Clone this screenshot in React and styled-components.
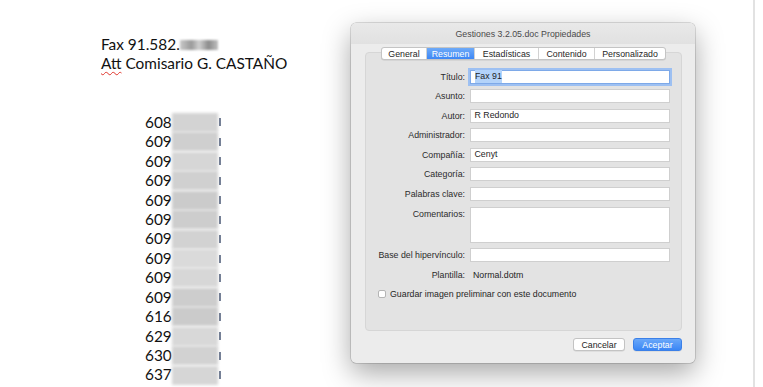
import React from "react";
import styled, { createGlobalStyle } from "styled-components";

const GlobalStyle = createGlobalStyle`
  html, body { margin: 0; padding: 0; background: #ffffff; }
  body { font-family: "Liberation Sans", Arial, sans-serif; }
  * { box-sizing: border-box; }
`;

const Page = styled.div`
  position: relative;
  width: 763px;
  height: 387px;
  overflow: hidden;
  background: #ffffff;
`;

const DocSheet = styled.div`
  width: 755px;
  height: 387px;
  border-right: 2px solid #e2e2e2;
  padding: 35px 0 0 101px;
  font-family: Lato, "Liberation Sans", sans-serif;
  font-size: 15.4px;
  color: #111;
`;

const DocLine = styled.div`
  height: 19.45px;
  line-height: 19.45px;
  white-space: nowrap;
  display: flex;
  align-items: center;
  padding-left: ${(p) => (p.$indent ? "44px" : "0")};
`;

const Misspelled = styled.span`
  text-decoration: underline wavy #e0352b;
  text-decoration-thickness: 1px;
  text-underline-offset: 2px;
`;

const Redacted = styled.span`
  display: inline-block;
  width: ${(p) => p.$w}px;
  height: ${(p) => p.$h}px;
  background: ${(p) => p.$bg};
  filter: blur(${(p) => p.$blur}px);
  margin-left: ${(p) => p.$ml || 0}px;
`;

const Sliver = styled.span`
  display: inline-block;
  width: 2px;
  height: 8px;
  background: #3a4a6a;
  opacity: 0.7;
  margin-left: 1px;
`;

const Dialog = styled.div`
  position: absolute;
  left: 351px;
  top: 23px;
  width: 344px;
  height: 340px;
  background: #ececec;
  border-radius: 5px;
  box-shadow: 0 0 0 0.5px rgba(0, 0, 0, 0.25), 0 10px 28px rgba(0, 0, 0, 0.35);
  display: flex;
  flex-direction: column;
  font-family: "Liberation Sans", Arial, sans-serif;
  font-size: 8.8px;
  color: #262626;
`;

const TitleBar = styled.div`
  height: 21px;
  display: flex;
  align-items: center;
  justify-content: center;
  color: #4a4a4a;
  background: linear-gradient(#e9e9e9, #e1e1e1);
  border-radius: 5px 5px 0 0;
`;

const Body = styled.div`
  flex: 1;
  display: flex;
  flex-direction: column;
  padding: 3px 13px 0 14px;
`;

const Tabs = styled.div`
  align-self: center;
  display: flex;
  height: 13px;
  margin-bottom: -8px;
  position: relative;
  z-index: 1;
  background: #ffffff;
  border: 0.5px solid #c4c4c4;
  border-radius: 3px;
  box-shadow: 0 0.5px 0.5px rgba(0, 0, 0, 0.12);
  overflow: hidden;
`;

const Tab = styled.div`
  width: ${(p) => p.$w}px;
  display: flex;
  align-items: center;
  justify-content: center;
  color: ${(p) => (p.$active ? "#ffffff" : "#262626")};
  background: ${(p) =>
    p.$active ? "linear-gradient(#6eaaf8, #3d87f5)" : "transparent"};
  border-left: ${(p) => (p.$first ? "none" : "0.5px solid #d2d2d2")};
`;

const Panel = styled.div`
  height: 279px;
  background: #e3e3e3;
  border: 0.5px solid #d6d6d6;
  border-radius: 4px;
  padding-top: 16.5px;
`;

const Form = styled.div`
  display: grid;
  grid-template-columns: 99px 200px;
  column-gap: 5px;
  row-gap: 5.6px;
`;

const Label = styled.div`
  text-align: right;
  line-height: 14px;
  height: ${(p) => p.$h || 14}px;
  color: #2b2b2b;
`;

const Field = styled.div`
  height: ${(p) => p.$h || 14}px;
  background: #ffffff;
  border: 0.5px solid ${(p) => (p.$focus ? "#7ea9e8" : "#cfcfcf")};
  box-shadow: ${(p) => (p.$focus ? "0 0 0 2px #9dc0f2" : "none")};
  padding: 0 3.5px;
  line-height: 13px;
  display: flex;
  align-items: ${(p) => (p.$multi ? "flex-start" : "center")};
  color: #1e1e1e;
`;

const Selected = styled.span`
  background: #b3d3fa;
  padding: 0 0.5px;
`;

const Plain = styled.div`
  line-height: 14px;
  height: 14px;
  padding-left: 3px;
  color: #1e1e1e;
`;

const CheckRow = styled.label`
  grid-column: 1 / span 2;
  display: flex;
  align-items: center;
  gap: 4px;
  padding-left: 12px;
  height: 14px;
  color: #262626;
`;

const Box = styled.span`
  width: 8px;
  height: 8px;
  background: #ffffff;
  border: 0.5px solid #b5b5b5;
  border-radius: 2px;
`;

const Footer = styled.div`
  display: flex;
  justify-content: flex-end;
  gap: 8px;
  margin-top: 7px;
`;

const Button = styled.div`
  width: ${(p) => p.$w}px;
  height: 13px;
  display: flex;
  align-items: center;
  justify-content: center;
  border-radius: 3px;
  color: ${(p) => (p.$primary ? "#ffffff" : "#262626")};
  background: ${(p) =>
    p.$primary ? "linear-gradient(#6aa8f9, #3a86f5)" : "#ffffff"};
  border: 0.5px solid ${(p) => (p.$primary ? "#3b80e8" : "#c3c3c3")};
  box-shadow: 0 0.5px 0.5px rgba(0, 0, 0, 0.12);
`;

const numbers = ["608", "609", "609", "609", "609", "609", "609", "609", "609", "609", "616", "629", "630", "637"];
const shades = ["#d3d3d3", "#cfcfcf", "#d6d6d6", "#d0d0d0", "#cbcbcb", "#cdcdcd", "#d2d2d2", "#dadada", "#d7d7d7", "#cdcdcd", "#cbcbcb", "#d8d8d8", "#d2d2d2", "#d6d6d6"];

const tabs = [
  { name: "General", w: 44 },
  { name: "Resumen", w: 48 },
  { name: "Estadísticas", w: 64 },
  { name: "Contenido", w: 56 },
  { name: "Personalizado", w: 71 },
];

const rows = [
  { label: "Título:", value: "Fax 91", focus: true },
  { label: "Asunto:", value: "" },
  { label: "Autor:", value: "R Redondo" },
  { label: "Administrador:", value: "" },
  { label: "Compañía:", value: "Cenyt" },
  { label: "Categoría:", value: "" },
  { label: "Palabras clave:", value: "" },
];

export default function App() {
  return (
    <Page>
      <GlobalStyle />
      <DocSheet>
        <DocLine>
          Fax 91.582.
          <Redacted $w={38} $h={10} $bg="linear-gradient(90deg,#c8c8c8,#9a9a9a 30%,#d0d0d0 50%,#8c8c8c 75%,#c0c0c0)" $blur={1.3} />
        </DocLine>
        <DocLine>
          <Misspelled>Att</Misspelled>&nbsp;Comisario G. CASTAÑO
        </DocLine>
        <DocLine />
        <DocLine />
        {numbers.map((n, i) => (
          <DocLine $indent key={i}>
            {n}
            <Redacted $w={46} $h={19} $bg={shades[i]} $blur={1.8} />
            <Sliver />
          </DocLine>
        ))}
      </DocSheet>

      <Dialog>
        <TitleBar>Gestiones 3.2.05.doc Propiedades</TitleBar>
        <Body>
          <Tabs>
            {tabs.map((t, i) => (
              <Tab key={t.name} $w={t.w} $first={i === 0} $active={t.name === "Resumen"}>
                {t.name}
              </Tab>
            ))}
          </Tabs>
          <Panel>
            <Form>
              {rows.map((r) => (
                <React.Fragment key={r.label}>
                  <Label>{r.label}</Label>
                  <Field $focus={r.focus}>
                    {r.focus ? <Selected>{r.value}</Selected> : r.value}
                  </Field>
                </React.Fragment>
              ))}
              <Label $h={36}>Comentarios:</Label>
              <Field $h={36} $multi />
              <Label>Base del hipervínculo:</Label>
              <Field />
              <Label>Plantilla:</Label>
              <Plain>Normal.dotm</Plain>
              <CheckRow>
                <Box />
                Guardar imagen preliminar con este documento
              </CheckRow>
            </Form>
          </Panel>
          <Footer>
            <Button $w={52}>Cancelar</Button>
            <Button $w={49} $primary>Aceptar</Button>
          </Footer>
        </Body>
      </Dialog>
    </Page>
  );
}
